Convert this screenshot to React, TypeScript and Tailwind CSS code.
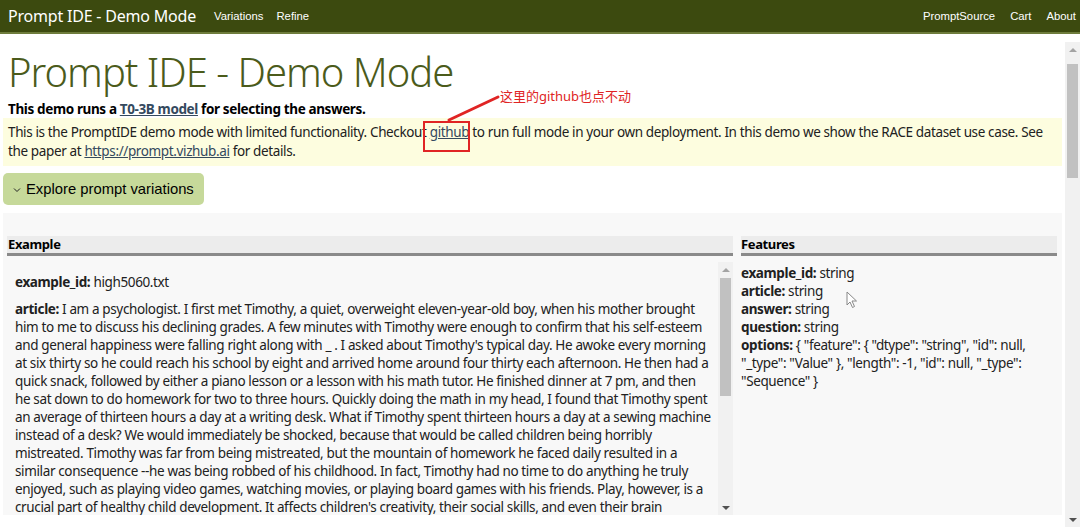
import React from 'react';

const article = [
  "I am a psychologist. I first met Timothy, a quiet, overweight eleven-year-old boy, when his mother brought",
  "him to me to discuss his declining grades. A few minutes with Timothy were enough to confirm that his self-esteem",
  "and general happiness were falling right along with _ . I asked about Timothy's typical day. He awoke every morning",
  "at six thirty so he could reach his school by eight and arrived home around four thirty each afternoon. He then had a",
  "quick snack, followed by either a piano lesson or a lesson with his math tutor. He finished dinner at 7 pm, and then",
  "he sat down to do homework for two to three hours. Quickly doing the math in my head, I found that Timothy spent",
  "an average of thirteen hours a day at a writing desk. What if Timothy spent thirteen hours a day at a sewing machine",
  "instead of a desk? We would immediately be shocked, because that would be called children being horribly",
  "mistreated. Timothy was far from being mistreated, but the mountain of homework he faced daily resulted in a",
  "similar consequence --he was being robbed of his childhood. In fact, Timothy had no time to do anything he truly",
  "enjoyed, such as playing video games, watching movies, or playing board games with his friends. Play, however, is a",
  "crucial part of healthy child development. It affects children's creativity, their social skills, and even their brain",
  "development. Without play, children can't learn to get along with others, solve problems or think for themselves.",
];

function Scrollbar({ thumbTop, thumbHeight }: { thumbTop: number; thumbHeight: number }) {
  return (
    <div className="w-[15px] shrink-0 bg-[#f1f1f1] flex flex-col items-center relative">
      <div className="h-[15px] flex items-center justify-center">
        <div className="w-0 h-0 border-l-[4px] border-r-[4px] border-b-[4px] border-l-transparent border-r-transparent border-b-[#a3a3a3]" />
      </div>
      <div className="absolute left-[2px] right-[2px] bg-[#c1c1c1]" style={{ top: thumbTop, height: thumbHeight }} />
      <div className="flex-1" />
      <div className="h-[15px] flex items-center justify-center">
        <div className="w-0 h-0 border-l-[4px] border-r-[4px] border-t-[4px] border-l-transparent border-r-transparent border-t-[#505050]" />
      </div>
    </div>
  );
}

export default function App() {
  const body = { fontFamily: '"Segoe UI", "Noto Sans", "Open Sans", sans-serif' };
  const arial = { fontFamily: '"Liberation Sans", Arial, sans-serif' };
  return (
    <div className="w-[1080px] h-[527px] overflow-hidden bg-white flex flex-col text-[#212121]" style={body}>
      {/* Navbar */}
      <nav className="h-[34px] shrink-0 bg-[#3c4a0f] border-b-2 border-[#6e7c3c] flex items-center pl-[8px] pr-[4px]">
        <span className="text-[16px] text-white mr-[18px] tracking-[-0.2px]">Prompt IDE - Demo Mode</span>
        <div className="flex gap-[13px] text-[11.3px] text-white" style={arial}>
          <span>Variations</span>
          <span>Refine</span>
        </div>
        <div className="ml-auto flex gap-[15px] text-[11.3px] text-white" style={arial}>
          <span>PromptSource</span>
          <span>Cart</span>
          <span>About</span>
        </div>
      </nav>

      <div className="flex-1 flex min-h-0">
        {/* Main */}
        <main className="flex-1 min-w-0 px-[3px] relative text-[13.5px] tracking-[-0.37px]">
          <h1 className="text-[40px] font-light text-[#4b5b1b] leading-none px-[5px] pt-[18px] tracking-[-1px]">Prompt IDE - Demo Mode</h1>
          <p className="font-bold px-[5px] mt-[8px] leading-[18px] text-black">
            This demo runs a <span className="underline text-[#34495e]">T0-3B model</span> for selecting the answers.
          </p>
          <div className="bg-[#fdfddf] px-[5px] py-[5px] leading-[19px] whitespace-nowrap">
            This is the PromptIDE demo mode with limited functionality. Checkout <span className="underline text-[#34495e]">github</span> to run full mode in your own deployment. In this demo we show the RACE dataset use case. See
            <br />
            the paper at <span className="underline text-[#34495e]">https://prompt.vizhub.ai</span> for details.
          </div>

          <button className="mt-[7px] h-[32px] w-[201px] rounded-[5px] bg-[#c6d99a] flex items-center pl-[10px] text-[14.8px] text-black whitespace-nowrap tracking-normal" style={arial}>
            <svg width="8" height="6" viewBox="0 0 8 6" className="mr-[5px] mt-[2px]">
              <path d="M1 1.5 L4 4.5 L7 1.5" fill="none" stroke="#222" strokeWidth="1" />
            </svg>
            Explore prompt variations
          </button>

          {/* Panel */}
          <div className="mt-[8px] h-[302px] bg-[#f8f8f8] flex gap-[8px] pl-[4px] pr-[5px] pt-[23px]">
            <section className="w-[726px] flex flex-col min-h-0">
              <div className="h-[20px] bg-[#ececec] border-b-[3px] border-[#8a8a8a] text-[13px] font-bold px-[1px] leading-[17px] text-black">Example</div>
              <div className="flex-1 min-h-0 mt-[6px] flex">
                <div className="flex-1 overflow-hidden pl-[8px] pr-[10px] pt-[11px] leading-[18px]">
                  <p><b>example_id:</b> high5060.txt</p>
                  <p className="mt-[9px] whitespace-nowrap">
                    {article.map((l, i) => (
                      <span key={i} className="block">
                        {i === 0 && <b>article: </b>}
                        {l}
                      </span>
                    ))}
                  </p>
                </div>
                <Scrollbar thumbTop={16} thumbHeight={118} />
              </div>
            </section>
            <section className="flex-1 flex flex-col">
              <div className="h-[20px] bg-[#ececec] border-b-[3px] border-[#8a8a8a] text-[13px] font-bold leading-[17px] text-black">Features</div>
              <div className="pt-[8px] leading-[18px]">
                <p><b>example_id:</b> string</p>
                <p><b>article:</b> string</p>
                <p><b>answer:</b> string</p>
                <p><b>question:</b> string</p>
                <p><b>options:</b> {'{ "feature": { "dtype": "string", "id": null,'}<br />{'"_type": "Value" }, "length": -1, "id": null, "_type":'}<br />{'"Sequence" }'}</p>
              </div>
            </section>
          </div>

          {/* Annotation */}
          <div className="absolute left-[423px] top-[87px] w-[47px] h-[31px] border-2 border-solid border-[#e02424]" />
          <svg className="absolute left-[445px] top-[60px]" width="60" height="30" viewBox="0 0 60 30">
            <line x1="4" y1="26" x2="53" y2="3" stroke="#e02424" strokeWidth="3" strokeLinecap="round" />
          </svg>
          <span className="absolute left-[500px] top-[53px] text-[13px] tracking-normal text-[#e02424]" style={{ fontFamily: '"Noto Sans", "Noto Sans CJK SC", sans-serif' }}>这里的github也点不动</span>

          {/* mouse cursor */}
          <svg className="absolute left-[846px] top-[257px]" width="12" height="18" viewBox="0 0 12 18">
            <path d="M1 1 L1 14 L4 11 L6.5 16.5 L8.5 15.5 L6 10 L10.5 10 Z" fill="#fff" stroke="#888" strokeWidth="1" strokeLinejoin="round" />
          </svg>
        </main>
        <div className="pt-[8px] flex">
          <div className="w-[15px] flex">
            <Scrollbar thumbTop={22} thumbHeight={114} />
          </div>
        </div>
      </div>
    </div>
  );
}
